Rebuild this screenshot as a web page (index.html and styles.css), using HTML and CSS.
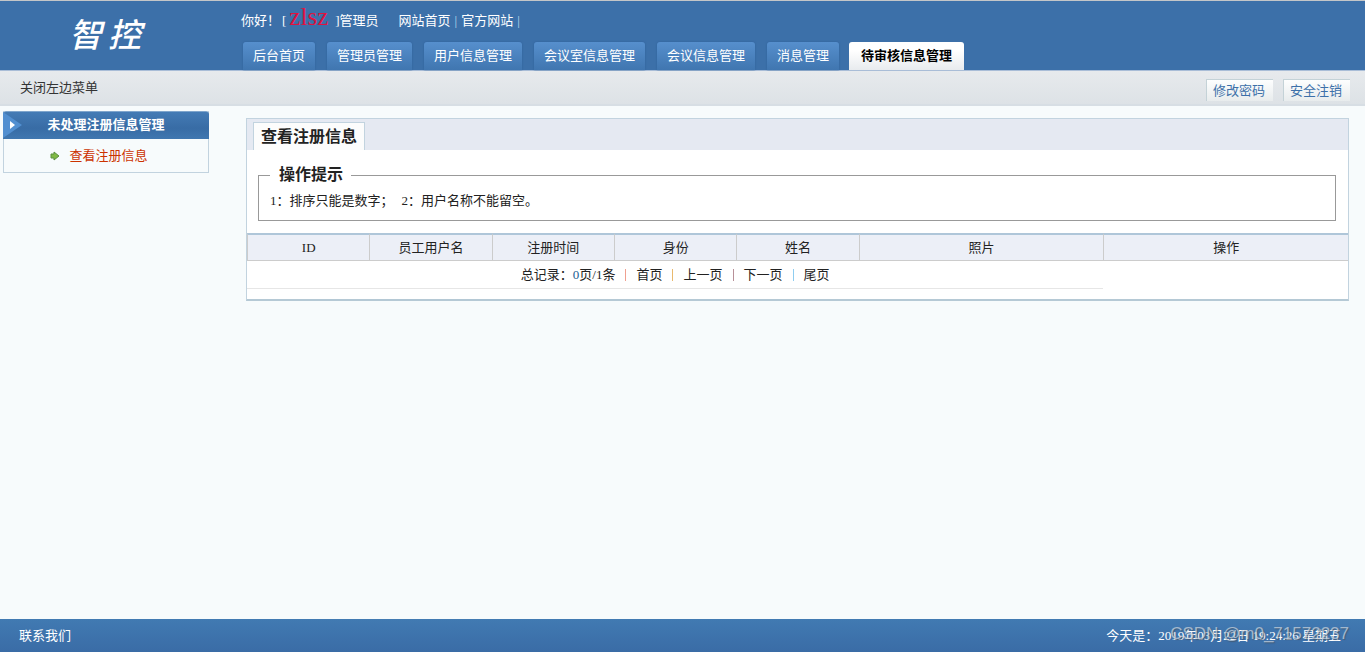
FILE: index.html
```html
<!DOCTYPE html>
<html lang="zh-CN">
<head>
<meta charset="utf-8">
<title>查看注册信息</title>
<link rel="stylesheet" href="styles.css">
</head>
<body>
<header class="header">
  <div class="logo">智<span>控</span></div>
  <div class="head-main">
    <div class="greeting">
      <span>你好！</span><span class="who">[<b class="user">zlsz</b>]管理员</span>
      <span class="site-links"><a href="#">网站首页</a><i>|</i><a href="#">官方网站</a><i>|</i></span>
    </div>
    <nav class="tabs">
      <a href="#">后台首页</a>
      <a href="#">管理员管理</a>
      <a href="#">用户信息管理</a>
      <a href="#">会议室信息管理</a>
      <a href="#">会议信息管理</a>
      <a href="#">消息管理</a>
      <a href="#" class="active">待审核信息管理</a>
    </nav>
  </div>
</header>
<div class="toolbar">
  <a href="#" class="toggle">关闭左边菜单</a>
  <div class="tools"><a href="#">修改密码</a><a href="#">安全注销</a></div>
</div>
<div class="content">
  <aside class="side">
    <h2 class="side-title">
      <svg class="side-arrow" width="20" height="27" viewBox="0 0 20 27" aria-hidden="true"><path d="M0 0 19 13 0 26z" fill="#528fd0"/><path d="M7 9l5 4-5 4z" fill="#fff"/></svg>
      未处理注册信息管理
    </h2>
    <a href="#" class="side-item">
      <svg width="10" height="10" viewBox="0 0 10 10" aria-hidden="true"><path d="M1 3h3V1l5 4-5 4V7H1z" fill="#80b944" stroke="#5b9140" stroke-linejoin="round"/></svg>
      <span>查看注册信息</span>
    </a>
  </aside>
  <main class="panel">
    <div class="panel-head"><h1>查看注册信息</h1></div>
    <fieldset class="tips">
      <legend>操作提示</legend>
      <p><span>1：排序只能是数字；</span><span>2：用户名称不能留空。</span></p>
    </fieldset>
    <table class="list">
      <colgroup><col><col><col><col><col><col class="wide"><col class="wide"></colgroup>
      <thead><tr><th>ID</th><th>员工用户名</th><th>注册时间</th><th>身份</th><th>姓名</th><th>照片</th><th>操作</th></tr></thead>
      <tbody><tr><td colspan="6">
        <div class="pager"><span>总记录：<em>0</em>页/1条</span><i class="sep red"></i><a href="#">首页</a><i class="sep orange"></i><a href="#">上一页</a><i class="sep rose"></i><a href="#">下一页</a><i class="sep blue"></i><a href="#">尾页</a></div>
      </td></tr></tbody>
    </table>
  </main>
</div>
<footer class="footer">
  <a href="#">联系我们</a>
  <span>今天是：2019年03月22日 19:24:26 星期五</span>
  <span class="watermark">CSDN @m0_71572237</span>
</footer>
</body>
</html>
```
FILE: styles.css
```css
* { box-sizing: border-box; }
body {
  margin: 0;
  min-height: 100vh;
  display: flex;
  flex-direction: column;
  background: #f7fbfc;
  color: #222;
  font: 13px/20px "Liberation Serif", "Noto Sans CJK SC", sans-serif;
}
a { color: inherit; text-decoration: none; }
h1, h2, p { margin: 0; }
i, em { font-style: normal; }

.header {
  display: flex;
  border-top: 1px solid #c4c6c8;
  border-bottom: 1px solid #a9bdd7;
  background: #3c70a9;
  color: #fff;
}
.logo {
  width: 241px;
  flex: none;
  padding-left: 69px;
  font: italic 500 33px/64px "Noto Sans CJK SC", sans-serif;
}
.logo span { margin-left: 6px; }
.head-main { flex: 1; }
.greeting {
  display: flex;
  align-items: baseline;
  height: 41px;
  line-height: 32px;
}
.who { margin-left: 2px; }
.user {
  margin: 0 7px 0 3px;
  color: #e0123f;
  font-size: 25px;
  font-weight: normal;
}
.site-links { margin-left: 20px; }
.site-links i { padding: 0 4px; color: #bfd8ee; }
.tabs { display: flex; gap: 12px; padding-left: 2px; }
.tabs a {
  padding: 0 10px;
  border-radius: 3px 3px 0 0;
  background: linear-gradient(#568fcd, #4076b0);
  box-shadow: 0 0 2px #2d5f99;
  line-height: 28px;
  white-space: nowrap;
}
.tabs .active {
  margin-left: -2px;
  padding: 0 12px;
  background: linear-gradient(#fff 30%, #e8ebee);
  box-shadow: none;
  color: #000;
  font-weight: bold;
}

.toolbar {
  display: flex;
  justify-content: space-between;
  align-items: center;
  height: 35px;
  padding: 0 15px 0 20px;
  border-bottom: 2px solid #d7dee4;
  background: linear-gradient(#e7eaed, #dde2e6);
  color: #333;
}
.tools { display: flex; gap: 10px; padding-top: 5px; }
.tools a {
  padding: 0 8px 0 6px;
  border-top: 1px solid #c4d2d7;
  border-left: 1px solid #c4d2d7;
  background: linear-gradient(#fdfefe, #e8eced);
  color: #3c70a9;
  line-height: 21px;
}

.content { flex: 1; display: flex; align-items: flex-start; padding: 5px 16px 20px 3px; }
.side { width: 206px; flex: none; border: 1px solid #c2d3df; border-top: 0; }
.side-title {
  position: relative;
  margin: 0 -1px;
  padding-bottom: 2px;
  border-top: 1px solid #7fa5cc;
  border-radius: 3px 3px 0 0;
  background: linear-gradient(#447bb5, #386ca5 60%, #4077b0);
  color: #fff;
  font-size: 13px;
  line-height: 25px;
  text-align: center;
}
.side-arrow { position: absolute; left: 0; top: 0; }
.side-item {
  display: flex;
  align-items: center;
  justify-content: center;
  gap: 9px;
  padding-right: 14px;
  color: #c30;
  line-height: 33px;
}

.panel {
  flex: 1;
  margin: 7px 0 0 37px;
  padding-bottom: 10px;
  border: 1px solid #c2d3df;
  border-bottom: 2px solid #b5c9d5;
  background: #fff;
}
.panel-head { display: flex; padding: 3px 6px 0; background: #e5e9f2; }
.panel-head h1 {
  padding: 0 7px;
  border: 1px solid #c2d3df;
  border-bottom: 0;
  background: #fcfcfc;
  font-size: 16px;
  line-height: 27px;
}
.tips {
  margin: 15px 12px 12px 11px;
  padding: 6px 11px 9px;
  border: 1px solid #999;
}
.tips legend { padding: 0 8px 0 9px; font-size: 16px; font-weight: bold; line-height: 20px; }
.tips p { display: flex; gap: 8px; line-height: 20px; }
.list { width: 100%; table-layout: fixed; border-collapse: separate; border-spacing: 0; }
.list .wide { width: 22.22%; }
.list th {
  padding: 0;
  border-top: 2px solid #afc6d9;
  border-bottom: 1px solid #ccc;
  border-left: 1px solid #ccc;
  background: #eceff7;
  font-weight: normal;
  line-height: 25px;
}
.list td { padding: 0; border-bottom: 1px solid #e6e6e6; line-height: 27px; }
.pager { display: flex; align-items: center; justify-content: center; }
.pager em { color: #235b91; }
.sep { width: 1px; height: 12px; margin: 0 10px; }
.red { background: #f0a090; }
.orange { background: #e9b96e; }
.rose { background: #b89098; }
.blue { background: #8fcdf0; }

.footer {
  position: relative;
  display: flex;
  justify-content: space-between;
  padding: 0 24px 0 19px;
  background: linear-gradient(#417ab2, #3a6ca6);
  color: #fff;
  line-height: 33px;
}
.watermark {
  position: absolute;
  right: 16px;
  top: -2px;
  color: #c3ced9;
  font-family: "Liberation Sans", sans-serif;
  font-size: 17px;
  opacity: 0.75;
  text-shadow: 1px 1px 1px #456;
}
```
